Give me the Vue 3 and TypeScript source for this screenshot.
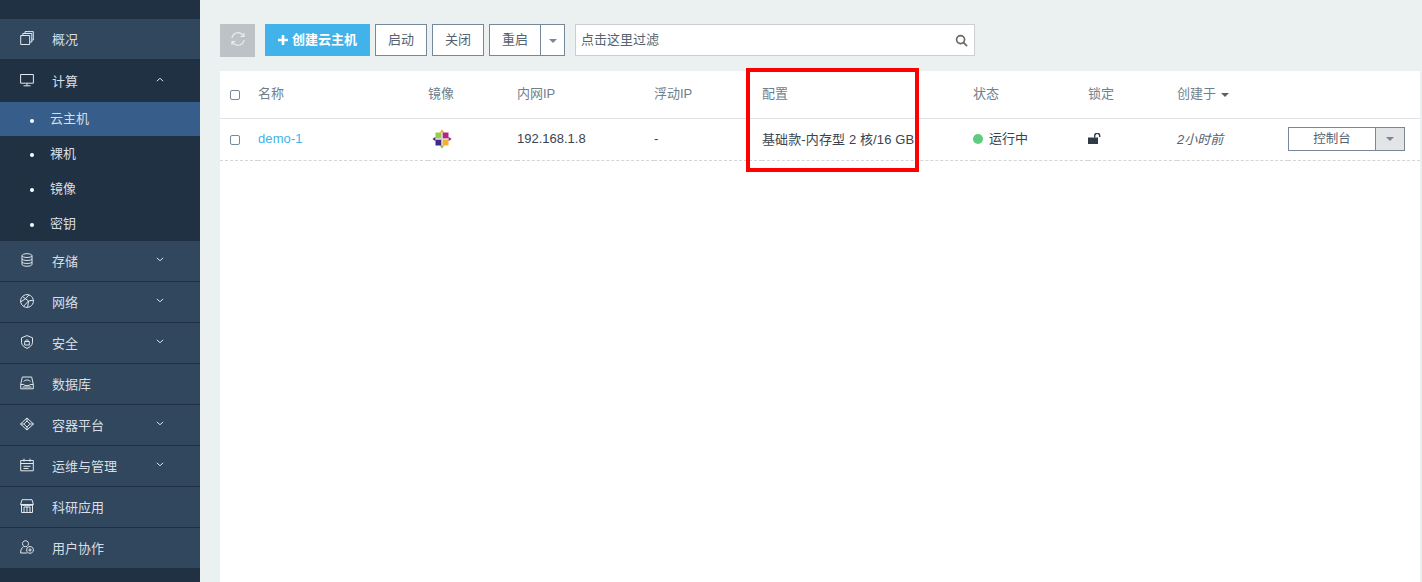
<script setup lang="ts">
interface NavItem {
  name: string;
  icon: string;
  arrow?: 'up' | 'down';
  children?: string[];
}

const navItems: NavItem[] = [
  { name: '概况', icon: 'M.7 4.500h9v9h-9z M2.800 4.500V2.500h9v8.500H9.700 M5 2.500V.6h8.300v8.400h-1.500' },
  {
    name: '计算',
    icon: 'M.6 1.500h12.800v8.700H.6z M7 10.200v2.600 M3.500 12.800h7',
    arrow: 'up',
    children: ['云主机', '裸机', '镜像', '密钥'],
  },
  {
    name: '存储',
    icon: 'M2 2.800c0-2.800 10-2.800 10 0v8.500c0 2.600-10 2.600-10 0z M2 2.800c0 2.200 10 2.200 10 0 M2 5.800c0 2.200 10 2.200 10 0 M2 8.800c0 2.200 10 2.200 10 0',
    arrow: 'down',
  },
  {
    name: '网络',
    icon: 'M7 .6a6.400 6.400 0 1 0 .01 0z M2.500 2.500 8.500 7l4.800-.8 M.8 7.800l5-3.300L9 .9 M3.500 12.300 8.500 7l-.8 6.200',
    arrow: 'down',
  },
  {
    name: '安全',
    icon: 'M7 .6l5.500 2.200v4.500c0 3-2.900 5-5.500 6.100-2.600-1.100-5.500-3.100-5.500-6.100V2.800z M4.700 6.500h4.600v3.500H4.700z M5.500 6.500c0-2.200 3-2.200 3 0',
    arrow: 'down',
  },
  {
    name: '数据库',
    icon: 'M.7 8.500 2.300 1h9.400l1.600 7.500v4.300H.7z M.7 8.500h3c.5 1.500 6 1.500 6.600 0h3 M3.500 5.500c2-2 5-2 7 0 M2.500 11h9',
  },
  {
    name: '容器平台',
    icon: 'M7 1 13.500 7 7 13 .5 7z M7 4 10.200 7 7 10 3.800 7z M.5 7h3.300 M10.200 7h3.300 M7 1v3 M7 10v3',
    arrow: 'down',
  },
  {
    name: '运维与管理',
    icon: 'M.7 2.500h12.600v10.300H.7z M.7 5.500h12.600 M4 .6v3 M10 .6v3 M3.500 8.300h7 M3.500 10.500h5',
    arrow: 'down',
  },
  {
    name: '科研应用',
    icon: 'M2 .7h10l1.400 4.800H.6z M1.500 5.500v8h11v-8 M4 8h6v5.500H4z M7 8v5.500 M.6 5.500c1 1.500 11.800 1.500 12.800 0',
  },
  {
    name: '用户协作',
    icon: 'M5.500.7a3 3 0 1 0 .01 0z M3.700 6.500C1.500 8 .6 10.200.6 13h6.600 M10 6.500a3.400 3.400 0 1 0 .01 0z M10 8.300v3.400 M8.300 10h3.400',
  },
];

const headers = ['名称', '镜像', '内网IP', '浮动IP', '配置', '状态', '锁定'];
</script>

<template>
  <div class="page">
    <aside class="sidebar">
      <template v-for="item in navItems" :key="item.name">
        <div class="nav-item" :class="{ 'nav-item--open': item.children }">
          <svg class="nav-icon" viewBox="0 0 14 14"><path :d="item.icon" /></svg>
          <span class="nav-name">{{ item.name }}</span>
          <svg v-if="item.arrow" class="nav-arrow" viewBox="0 0 10 6">
            <path :d="item.arrow === 'up' ? 'M1 5l4-3.500L9 5' : 'M1 1l4 3.500L9 1'" />
          </svg>
        </div>
        <div
          v-for="(child, index) in item.children"
          :key="child"
          class="nav-child"
          :class="{ 'nav-child--active': index === 0 }"
        >
          <i class="bullet"></i>{{ child }}
        </div>
      </template>
    </aside>

    <main class="content">
      <div class="toolbar">
        <button class="btn btn--refresh" type="button" aria-label="刷新">
          <svg viewBox="0 0 16 16" width="16" height="16">
            <path d="M2 7A6 6 0 0 1 12.500 3.800L14 5.500 M14 2v3.500h-3.500 M14 9A6 6 0 0 1 3.500 12.200L2 10.500 M2 14v-3.500h3.500" />
          </svg>
        </button>
        <button class="btn btn--primary" type="button">
          <svg class="plus" viewBox="0 0 10 10" width="10" height="10"><path d="M3.700 0h2.600v3.700H10v2.600H6.300V10H3.700V6.300H0V3.700h3.700z" /></svg>创建云主机
        </button>
        <button class="btn" type="button">启动</button>
        <button class="btn" type="button">关闭</button>
        <div class="split">
          <button class="btn" type="button">重启</button>
          <button class="btn btn--caret" type="button"><i class="caret"></i></button>
        </div>
        <div class="search">
          <span>点击这里过滤</span>
          <svg viewBox="0 0 14 14" width="13" height="13">
            <circle cx="6" cy="6" r="4.300" />
            <path d="M9.200 9.200l3.800 3.800" />
          </svg>
        </div>
      </div>

      <section class="panel">
        <table class="table">
          <colgroup>
            <col class="col-check" />
            <col class="col-name" />
            <col class="col-image" />
            <col class="col-ip" />
            <col class="col-float" />
            <col class="col-config" />
            <col class="col-status" />
            <col class="col-lock" />
            <col class="col-created" />
            <col />
          </colgroup>
          <thead>
            <tr>
              <th class="cell-check"><i class="checkbox"></i></th>
              <th v-for="header in headers" :key="header">{{ header }}</th>
              <th>创建于<i class="caret caret--sort"></i></th>
              <th></th>
            </tr>
          </thead>
          <tbody>
            <tr>
              <td class="cell-check"><i class="checkbox"></i></td>
              <td><a class="link">demo-1</a></td>
              <td>
                <svg class="distro" viewBox="0 0 20 20" width="20" height="20">
                  <path fill="#f5a623" d="M10 .5l2.200 3H7.800z" />
                  <path fill="#7fbf3f" d="M10 19.500l-2.200-3h4.400z" />
                  <path fill="#8e1f7c" d="M19.500 10l-3 2.200V7.800z" />
                  <path fill="#3c2a7d" d="M.5 10l3-2.200v4.400z" />
                  <rect x="3.500" y="3.500" width="6" height="6" fill="#9ccb4a" />
                  <rect x="10.500" y="3.500" width="6" height="6" fill="#b0287f" />
                  <rect x="3.500" y="10.500" width="6" height="6" fill="#3f2a86" />
                  <rect x="10.500" y="10.500" width="6" height="6" fill="#f7b126" />
                  <path fill="#d9c8d6" d="M9.500 3.500h1v6h6v1h-6v6h-1v-6h-6v-1h6z" />
                </svg>
              </td>
              <td>192.168.1.8</td>
              <td>-</td>
              <td class="config">基础款-内存型 2 核/16 GB</td>
              <td class="cell-status"><i class="dot"></i>运行中</td>
              <td>
                <svg class="lock" viewBox="0 0 13 11" width="13" height="11">
                  <rect x="0" y="4.500" width="10" height="6.500" fill="#2f3b47" stroke="none" />
                  <path d="M6.700 4.500V2.800a2.500 2.500 0 0 1 5 0V4" />
                </svg>
              </td>
              <td class="time">2小时前</td>
              <td>
                <div class="console">
                  <span class="console__label">控制台</span>
                  <span class="console__caret"><i class="caret"></i></span>
                </div>
              </td>
            </tr>
          </tbody>
        </table>
      </section>
    </main>

    <div class="highlight"></div>
  </div>
</template>

<style scoped>
.page {
  position: relative;
  display: flex;
  height: 582px;
  overflow: hidden;
  background: #ebf0f0;
  font-family: "Liberation Sans", "Noto Sans CJK SC", sans-serif;
  font-size: 13px;
  color: #3a444e;
}

.sidebar {
  flex: 0 0 200px;
  box-sizing: border-box;
  padding-top: 19px;
  background: #1f3143;
  color: #d8dee3;
}

.nav-item {
  display: flex;
  align-items: center;
  box-sizing: border-box;
  height: 41px;
  padding: 0 0 2px 20px;
  background: #30475e;
  border-bottom: 1px solid #1f3143;
}

.nav-item--open {
  height: 42px;
  background: #1f3143;
  border-bottom: 0;
}

.nav-icon {
  width: 14px;
  height: 14px;
  fill: none;
  stroke: #e3e8ec;
  stroke-width: 1;
}

.nav-name {
  margin-left: 18px;
}

.nav-arrow {
  width: 8px;
  height: 5px;
  margin-left: auto;
  margin-right: 36px;
  margin-top: -2px;
  fill: none;
  stroke: #e3e8ec;
  stroke-width: 1.200;
}

.nav-child {
  display: flex;
  align-items: center;
  box-sizing: border-box;
  height: 35px;
  padding: 0 0 3px 30px;
  background: #1f3143;
}

.nav-child--active {
  height: 34px;
  background: #375d8a;
}

.bullet {
  width: 4px;
  height: 4px;
  margin-top: 6px;
  margin-right: 16px;
  border-radius: 50%;
  background: #fff;
}

.content {
  flex: 1;
  min-width: 0;
  padding: 24px 2px 0 20px;
}

.toolbar {
  display: flex;
  align-items: flex-start;
  height: 47px;
}

.btn {
  box-sizing: border-box;
  width: 52px;
  height: 32px;
  margin-right: 5px;
  padding: 0 0 3px;
  border: 1px solid #76889a;
  border-radius: 0;
  background: #fff;
  color: #55626f;
  font: inherit;
}

.btn--refresh {
  width: 35px;
  height: 33px;
  margin-right: 10px;
  padding: 0;
  border: 0;
  background: #bcc3c7;
}

.btn--refresh svg {
  display: block;
  margin: -3px auto 0;
  fill: none;
  stroke: #e9edef;
  stroke-width: 1.200;
}

.btn--primary {
  width: 105px;
  border: 0;
  background: #41b3ea;
  color: #fff;
  font-weight: 700;
}

.plus {
  margin-right: 4px;
  fill: #fff;
  vertical-align: -1px;
}

.split {
  display: flex;
  margin-right: 10px;
}

.split .btn {
  margin-right: 0;
}

.btn--caret {
  width: 25px;
  margin-left: -1px;
  padding: 0;
}

.caret {
  display: inline-block;
  border-style: solid;
  border-width: 4px 4px 0;
  border-color: #76889a transparent transparent;
  vertical-align: middle;
}

.search {
  display: flex;
  align-items: center;
  justify-content: space-between;
  box-sizing: border-box;
  width: 400px;
  height: 32px;
  padding: 0 6px 3px 5px;
  border: 1px solid #c9cfd2;
  background: #fff;
  color: #55626f;
}

.search svg {
  margin-top: 3px;
  fill: none;
  stroke: #666;
  stroke-width: 1.800;
}

.panel {
  height: 511px;
  background: #fff;
}

.table {
  width: 100%;
  table-layout: fixed;
  border-collapse: separate;
  border-spacing: 0;
}

.col-check { width: 38px; }
.col-name { width: 170px; }
.col-image { width: 89px; }
.col-ip { width: 137px; }
.col-float { width: 108px; }
.col-config { width: 211px; }
.col-status { width: 115px; }
.col-lock { width: 89px; }
.col-created { width: 111px; }

th,
td {
  box-sizing: border-box;
  padding: 0;
  text-align: left;
  white-space: nowrap;
}

th {
  height: 48px;
  padding-bottom: 4px;
  border-bottom: 1px solid #dfe3e5;
  color: #6f7f8e;
  font-weight: 400;
}

td {
  height: 42px;
  padding-bottom: 2px;
  border-bottom: 1px dashed #d2d6d8;
}

th.cell-check,
td.cell-check {
  padding: 0 0 0 10px;
}

.checkbox {
  display: block;
  box-sizing: border-box;
  width: 10px;
  height: 10px;
  border: 1px solid #76889a;
  border-radius: 2px;
  background: #fff;
}

.link {
  color: #41b3ea;
  letter-spacing: 0.1px;
}

.distro {
  display: block;
  margin-left: 4px;
}

td.config {
  padding-bottom: 3px;
  letter-spacing: 0.12px;
}

td.cell-status {
  padding-bottom: 4px;
}

.dot {
  display: inline-block;
  width: 10px;
  height: 10px;
  margin-right: 6px;
  border-radius: 50%;
  background: #5fcb7f;
  vertical-align: -1px;
}

.lock {
  display: block;
  margin-top: -1px;
  fill: none;
  stroke: #2f3b47;
  stroke-width: 1.400;
}

.time {
  font-style: italic;
  color: #55626f;
}

.caret--sort {
  margin-left: 5px;
  border-color: #55626f transparent transparent;
}

.console {
  display: flex;
  width: 117px;
  height: 24px;
  box-sizing: border-box;
  border: 1px solid #76889a;
  color: #55626f;
  font-size: 12.5px;
}

.console__label {
  flex: 1;
  line-height: 22px;
  text-align: center;
}

.console__caret {
  display: flex;
  align-items: center;
  justify-content: center;
  width: 28px;
  border-left: 1px solid #76889a;
  background: #e2e4e5;
}

.highlight {
  position: absolute;
  left: 746px;
  top: 68px;
  box-sizing: border-box;
  width: 173px;
  height: 104px;
  border: 4px solid #f00;
}
</style>
